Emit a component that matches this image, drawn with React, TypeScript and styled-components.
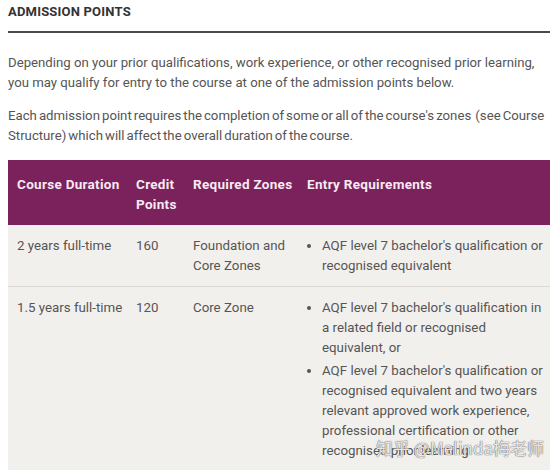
import React, { FC } from 'react';
import styled, { createGlobalStyle } from 'styled-components';

const GlobalStyle = createGlobalStyle`
  body {
    margin: 0;
    background: #ffffff;
    font-family: Roboto, 'Noto Sans', sans-serif;
  }
`;

const Page = styled.div`
  position: relative;
  width: 554px;
  height: 470px;
  overflow: hidden;
  padding: 2px 4px 0 8px;
  box-sizing: border-box;
`;

const Heading = styled.h2`
  margin: 0;
  font-size: 13px;
  line-height: 20px;
  font-weight: 700;
  color: #333;
  letter-spacing: 0.2px;
  padding-bottom: 9px;
  border-bottom: 2px solid #4a4a4a;
`;

const Text = styled.p<{ $tight?: boolean }>`
  margin: 20px -6px 0 0;
  font-size: 13.2px;
  line-height: 19.5px;
  color: #555;
  word-spacing: ${(p) => (p.$tight ? '-1.2px' : '0')};
  & + & {
    margin-top: 14px;
  }
`;

const Table = styled.table`
  margin-top: 15px;
  width: 542px;
  border-collapse: collapse;
  table-layout: fixed;
`;

const HeadCell = styled.th`
  background: #7b215c;
  color: #f6ebf2;
  text-align: left;
  vertical-align: top;
  font-size: 13.5px;
  line-height: 20px;
  font-weight: 700;
  letter-spacing: 0.3px;
  padding: 14px 2px 11px 9px;
`;

const Row = styled.tr`
  background: #f2f0ed;
  border-bottom: 1px solid #dcd9d4;
`;

const Cell = styled.td`
  vertical-align: top;
  font-size: 13.3px;
  line-height: 20px;
  color: #555;
  padding: 11px 4px 10px 9px;
`;

const List = styled.ul`
  margin: 0;
  padding-left: 15px;
`;

const Item = styled.li`
  & + & {
    margin-top: 3px;
  }
`;

const Watermark = styled.div`
  position: absolute;
  left: 376px;
  top: 435px;
  font-family: 'Noto Sans CJK SC', 'Noto Sans', sans-serif;
  font-size: 17px;
  color: rgba(255, 255, 255, 0.85);
  text-shadow: 0 0 1px #666, 0 0 1px #666;
  white-space: nowrap;
`;

const rows = [
  {
    duration: '2 years full-time',
    credits: '160',
    zones: 'Foundation and Core Zones',
    reqs: ["AQF level 7 bachelor's qualification or recognised equivalent"],
  },
  {
    duration: '1.5 years full-time',
    credits: '120',
    zones: 'Core Zone',
    reqs: [
      "AQF level 7 bachelor's qualification in a related field or recognised equivalent, or",
      "AQF level 7 bachelor's qualification or recognised equivalent and two years relevant approved work experience, professional certification or other recognised prior learning",
    ],
  },
];

const App: FC = () => {
  return (
    <Page>
      <GlobalStyle />
      <Heading>ADMISSION POINTS</Heading>
      <Text>
        Depending on your prior qualifications, work experience, or other recognised prior learning,
        you may qualify for entry to the course at one of the admission points below.
      </Text>
      <Text $tight>
        Each admission point requires the completion of some or all of the course's zones&nbsp; (see Course
        Structure) which will affect the overall duration of the course.
      </Text>
      <Table>
        <colgroup>
          <col style={{ width: 119 }} />
          <col style={{ width: 57 }} />
          <col style={{ width: 114 }} />
          <col />
        </colgroup>
        <thead>
          <tr>
            <HeadCell>Course Duration</HeadCell>
            <HeadCell>Credit Points</HeadCell>
            <HeadCell>Required Zones</HeadCell>
            <HeadCell>Entry Requirements</HeadCell>
          </tr>
        </thead>
        <tbody>
          {rows.map((r) => (
            <Row key={r.duration}>
              <Cell>{r.duration}</Cell>
              <Cell>{r.credits}</Cell>
              <Cell>{r.zones}</Cell>
              <Cell>
                <List>
                  {r.reqs.map((q) => (
                    <Item key={q}>{q}</Item>
                  ))}
                </List>
              </Cell>
            </Row>
          ))}
        </tbody>
      </Table>
      <Watermark>知乎 @Melinda梅老师</Watermark>
    </Page>
  );
};

export default App;
